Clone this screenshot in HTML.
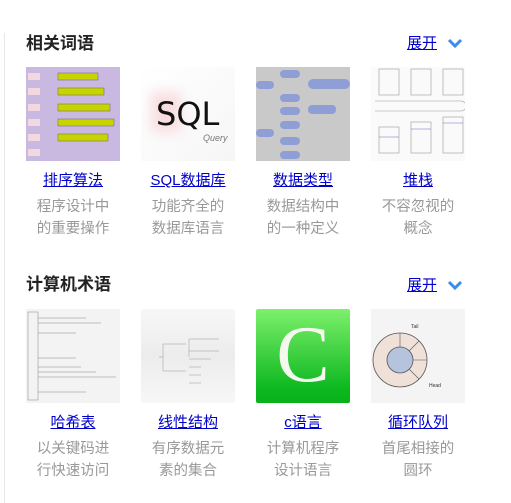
<!DOCTYPE html>
<html><head><meta charset="utf-8"><style>
*{margin:0;padding:0;box-sizing:border-box}
body{width:511px;height:498px;background:#fff;position:relative;overflow:hidden;font-family:"Liberation Sans","Noto Sans CJK SC",sans-serif}
.vl{position:absolute;left:4px;top:33px;width:1px;height:470px;background:#e6e6e6}
.t{position:absolute;left:26px;font-size:17px;font-weight:bold;color:#222;line-height:20px}
.more{position:absolute;left:407px;font-size:15px;color:#00c;text-decoration:underline;line-height:20px}
.chev{position:absolute;left:447px}
.it{position:absolute;width:94px;text-align:center}
.img{width:94px;height:94px;position:relative;overflow:hidden}
.lk{display:block;font-size:15px;color:#00c;text-decoration:underline;margin-top:10px;line-height:20px;white-space:nowrap;margin-left:-10px;margin-right:-10px}
.d{font-size:14.5px;color:#999;line-height:22px;margin-top:5px;white-space:nowrap;margin-left:-10px;margin-right:-10px}
</style></head><body>
<div class="vl"></div>

<div class="t" style="top:34px">相关词语</div>
<div class="more" style="top:34px">展开</div>
<svg class="chev" style="top:37px" width="16" height="12" viewBox="0 0 16 12"><path d="M2 3 L8 9 L14 3" stroke="#3b8cf0" stroke-width="3" fill="none"/></svg>

<div class="it" style="left:26px;top:67px">
<div class="img" style="background:#c9b9e0">
<svg width="94" height="94"><g fill="#c8d400" stroke="#666" stroke-width=".5">
<rect x="32" y="6" width="40" height="7"/><rect x="32" y="21" width="46" height="7"/><rect x="32" y="37" width="52" height="7"/><rect x="32" y="52" width="56" height="7"/><rect x="32" y="67" width="50" height="7"/></g>
<g fill="#f4d8e0"><rect x="2" y="6" width="12" height="7"/><rect x="2" y="21" width="12" height="7"/><rect x="2" y="37" width="12" height="7"/><rect x="2" y="52" width="12" height="7"/><rect x="2" y="67" width="12" height="7"/><rect x="2" y="82" width="12" height="7"/></g></svg>
</div>
<a class="lk">排序算法</a><div class="d">程序设计中<br>的重要操作</div></div>

<div class="it" style="left:141px;top:67px">
<div class="img" style="background:linear-gradient(135deg,#fff 0%,#f6f6f6 100%)">
<div style="position:absolute;left:10px;top:25px;width:30px;height:40px;background:#f8dde0;filter:blur(6px)"></div>
<div style="position:absolute;left:15px;top:28px;font-size:32px;color:#111;font-family:'DejaVu Sans',sans-serif">SQL</div>
<div style="position:absolute;left:62px;top:66px;font-size:9px;color:#777;font-style:italic">Query</div>
</div>
<a class="lk">SQL数据库</a><div class="d">功能齐全的<br>数据库语言</div></div>

<div class="it" style="left:256px;top:67px">
<div class="img" style="background:#c9c9c9">
<svg width="94" height="94"><g fill="#8f9fd6"><rect x="0" y="14" width="18" height="8" rx="4"/><rect x="24" y="3" width="20" height="8" rx="4"/><rect x="24" y="27" width="20" height="8" rx="4"/><rect x="52" y="12" width="42" height="10" rx="5"/><rect x="52" y="38" width="28" height="9" rx="4"/><rect x="0" y="62" width="18" height="8" rx="4"/><rect x="24" y="40" width="20" height="8" rx="4"/><rect x="24" y="54" width="20" height="8" rx="4"/><rect x="24" y="70" width="20" height="8" rx="4"/><rect x="24" y="84" width="20" height="8" rx="4"/></g></svg>
</div>
<a class="lk">数据类型</a><div class="d">数据结构中<br>的一种定义</div></div>

<div class="it" style="left:371px;top:67px">
<div class="img" style="background:#fafafa">
<svg width="94" height="94" stroke="#999" stroke-width=".6" fill="none"><rect x="8" y="2" width="20" height="26"/><rect x="40" y="2" width="20" height="26"/><rect x="72" y="2" width="20" height="26"/><path d="M4 34 H90 a5 5 0 0 1 0 10 H4"/><rect x="8" y="60" width="20" height="26"/><rect x="40" y="55" width="20" height="31"/><rect x="72" y="50" width="20" height="36"/><path d="M8 70 H28 M40 62 H60 M72 56 H92" stroke="#66c"/></svg>
</div>
<a class="lk">堆栈</a><div class="d">不容忽视的<br>概念</div></div>

<div class="t" style="top:275px">计算机术语</div>
<div class="more" style="top:276px">展开</div>
<svg class="chev" style="top:279px" width="16" height="12" viewBox="0 0 16 12"><path d="M2 3 L8 9 L14 3" stroke="#3b8cf0" stroke-width="3" fill="none"/></svg>

<div class="it" style="left:26px;top:309px">
<div class="img" style="background:#f3f3f3">
<svg width="94" height="94" stroke="#888" stroke-width=".5" fill="none"><rect x="2" y="3" width="10" height="88"/><path d="M12 9 H60 M12 14 H75 M12 24 H50 M12 49 H50 M12 58 H55 M12 63 H70 M12 68 H90 M12 83 H60"/></svg>
</div>
<a class="lk">哈希表</a><div class="d">以关键码进<br>行快速访问</div></div>

<div class="it" style="left:141px;top:309px">
<div class="img" style="background:linear-gradient(#f7f7f7,#ececec 50%,#f7f7f7)">
<svg width="94" height="94" stroke="#999" stroke-width=".5" fill="none"><path d="M18 48 H22 M22 35 V62 M22 35 H45 M22 62 H45 M48 30 V48 M48 30 H78 M48 42 H78 M48 50 H70 M48 58 H60 M48 66 H60 M48 74 H60"/></svg>
</div>
<a class="lk">线性结构</a><div class="d">有序数据元<br>素的集合</div></div>

<div class="it" style="left:256px;top:309px">
<div class="img" style="background:linear-gradient(#7df06c,#0db81f 85%,#09b01a);border-radius:2px">
<div style="position:absolute;left:0;right:0;top:6px;text-align:center;font-family:'Liberation Serif',serif;font-size:80px;line-height:80px;color:#f4f8ee">C</div>
</div>
<a class="lk">c语言</a><div class="d">计算机程序<br>设计语言</div></div>

<div class="it" style="left:371px;top:309px">
<div class="img" style="background:#f4f4f4">
<svg width="94" height="94"><circle cx="29" cy="51" r="27" fill="#efe0d8" stroke="#555" stroke-width=".8"/><circle cx="29" cy="51" r="13" fill="#b5c3dd" stroke="#555" stroke-width=".8"/><path d="M29 24 V38 M48 32 L38 42 M56 51 H42 M48 70 L38 60" stroke="#555" stroke-width=".6"/><text x="40" y="19" font-size="5" fill="#333">Tail</text><text x="58" y="78" font-size="5" fill="#333">Head</text></svg>
</div>
<a class="lk">循环队列</a><div class="d">首尾相接的<br>圆环</div></div>
</body></html>
